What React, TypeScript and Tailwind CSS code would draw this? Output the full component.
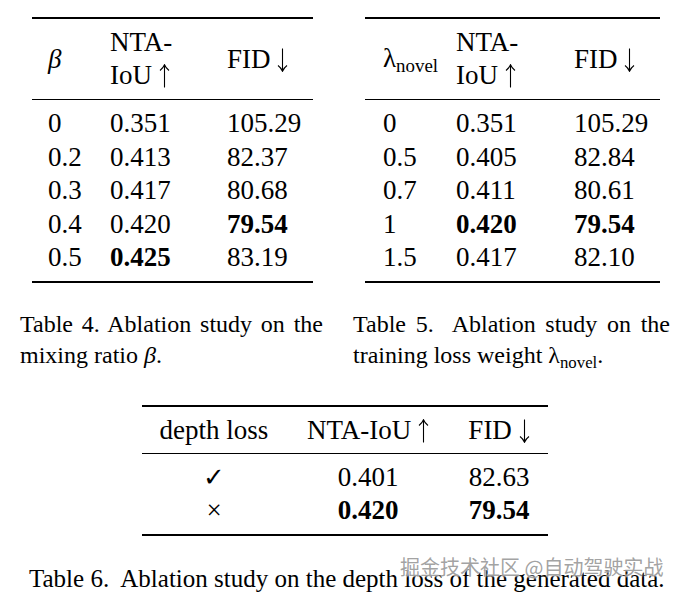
import React from "react";

const serif = { fontFamily: '"Liberation Serif", "Times New Roman", serif' };

type Row = [React.ReactNode, React.ReactNode, React.ReactNode];

// thin math-style arrow, as in the LaTeX tables
const Arrow = ({ down }: { down?: boolean }) => (
  <svg
    width="11"
    height="24"
    viewBox="0 0 11 24"
    className={`inline-block align-[-4px] ${down ? "rotate-180" : ""}`}
    fill="none"
    stroke="black"
    strokeWidth="1.1"
  >
    <path d="M5.5 23.5V1" />
    <path d="M1 6.5C3 5 4.6 3 5.5 0.8C6.4 3 8 5 10 6.5" />
  </svg>
);

const t4: Row[] = [
  ["0", "0.351", "105.29"],
  ["0.2", "0.413", "82.37"],
  ["0.3", "0.417", "80.68"],
  ["0.4", "0.420", <b key="b">79.54</b>],
  ["0.5", <b key="b">0.425</b>, "83.19"],
];

const t5: Row[] = [
  ["0", "0.351", "105.29"],
  ["0.5", "0.405", "82.84"],
  ["0.7", "0.411", "80.61"],
  ["1", <b key="b">0.420</b>, <b key="c">79.54</b>],
  ["1.5", "0.417", "82.10"],
];

const Lambda = ({ sub }: { sub: string }) => (
  <span>
    λ<span className="text-[0.7em] leading-none align-[-0.28em]">{sub}</span>
  </span>
);

const SmallTable = ({
  rows,
  first,
  cols,
  width,
  pad,
}: {
  rows: Row[];
  first: React.ReactNode;
  cols: string;
  width: string;
  pad: string;
}) => (
  <div className={`${width} text-[27px] text-black`}>
    <div className="h-[2px] bg-black" />
    <div className={`grid ${cols} ${pad} items-center pt-[7px] pb-[7px] leading-[33px]`}>
      <div>{first}</div>
      <div>
        NTA-
        <br />
        IoU <Arrow />
      </div>
      <div>
        FID <Arrow down />
      </div>
    </div>
    <div className="h-px bg-black" />
    <div className={`${pad} pt-[7px] pb-[6px] leading-[33.5px]`}>
      {rows.map((r, i) => (
        <div key={i} className={`grid ${cols}`}>
          <div>{r[0]}</div>
          <div>{r[1]}</div>
          <div>{r[2]}</div>
        </div>
      ))}
    </div>
    <div className="h-[2px] bg-black" />
  </div>
);

export default function App() {
  return (
    <div className="relative w-[679px] h-[597px] bg-white text-black overflow-hidden" style={serif}>
      <div className="flex pt-[17px] pl-[20px] gap-[30px]">
        <div className="w-[303px]">
          <div className="ml-[12px]">
            <SmallTable
              rows={t4}
              first={<i>β</i>}
              width="w-[281px]"
              pad="pl-[16px]"
              cols="grid-cols-[62px_117px_86px]"
            />
          </div>
          <div className="mt-[26px] text-[24px] leading-[31px]">
            <div className="text-justify [text-align-last:justify] whitespace-nowrap">Table 4. Ablation study on the</div>
            <div>
              mixing ratio <i>β</i>.
            </div>
          </div>
        </div>
        <div className="w-[317px]">
          <div className="ml-[12px]">
            <SmallTable
              rows={t5}
              first={<Lambda sub="novel" />}
              width="w-[295px]"
              pad="pl-[18px]"
              cols="grid-cols-[73px_118px_86px]"
            />
          </div>
          <div className="mt-[26px] text-[24px] leading-[31px]">
            <div className="text-justify [text-align-last:justify]">Table 5.&nbsp; Ablation study on the</div>
            <div className="h-[31px]">
              training loss weight <Lambda sub="novel" />.
            </div>
          </div>
        </div>
      </div>

      <div className="ml-[142px] mt-[34px] w-[406px] text-[27px]">
        <div className="h-[2px] bg-black" />
        <div className="grid grid-cols-[144px_164px_98px] text-center pt-[7px] pb-[6px] leading-[33px]">
          <div>depth loss</div>
          <div>
            NTA-IoU <Arrow />
          </div>
          <div>
            FID <Arrow down />
          </div>
        </div>
        <div className="h-px bg-black" />
        <div className="pt-[7px] pb-[7px] leading-[33px]">
          <div className="grid grid-cols-[144px_164px_98px] text-center h-[33px]">
            <div style={{ fontFamily: '"DejaVu Sans", sans-serif' }} className="text-[26px] font-bold leading-[33px]">
              ✓
            </div>
            <div>0.401</div>
            <div>82.63</div>
          </div>
          <div className="grid grid-cols-[144px_164px_98px] text-center h-[33px]">
            <div>×</div>
            <div className="font-bold">0.420</div>
            <div className="font-bold">79.54</div>
          </div>
        </div>
        <div className="h-[2px] bg-black" />
      </div>

      <div className="ml-[29px] mt-[27px] text-[25px] leading-[31px] whitespace-nowrap">
        Table 6.&nbsp; Ablation study on the depth loss of the generated data.
      </div>

      <div
        className="absolute left-[400px] top-[554px] text-[20px] leading-[26px] text-[#8a8a8a]/80 whitespace-nowrap"
        style={{
          fontFamily: '"Noto Sans CJK SC", sans-serif',
          textShadow: "0 0 2px #fff, 0 0 2px #fff",
        }}
      >
        掘金技术社区 @自动驾驶实战
      </div>
    </div>
  );
}
